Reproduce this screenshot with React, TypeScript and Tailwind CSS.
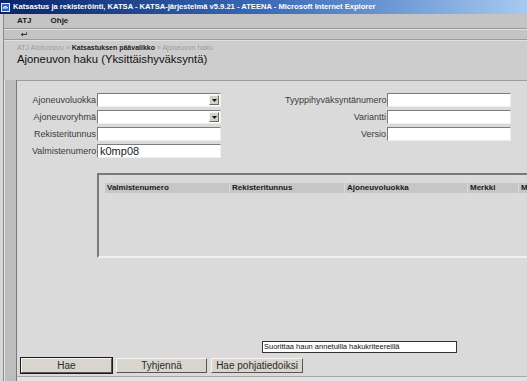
import type { ReactNode } from 'react';

const INSET =
  'border border-t-[#7c7c7c] border-l-[#7c7c7c] border-b-[#eeeeee] border-r-[#eeeeee] bg-white';

function Label({ children }: { children: ReactNode }) {
  return <span className="text-right text-[9px] leading-[14px] text-[#3a3a3a] whitespace-nowrap">{children}</span>;
}

function TextField({ value }: { value?: string }) {
  return (
    <div className={`h-[14px] flex items-center pl-[2px] text-[11px] leading-none text-[#222] ${INSET}`}>
      {value}
    </div>
  );
}

function SelectField() {
  return (
    <div className={`h-[14px] flex justify-end items-stretch py-[1px] pr-[1px] ${INSET}`}>
      <div className="w-[10px] flex items-center justify-center bg-[#d4d0c8] border border-t-[#f4f4f4] border-l-[#f4f4f4] border-b-[#6a6a6a] border-r-[#6a6a6a]">
        <svg width="5" height="3" viewBox="0 0 5 3">
          <path d="M0 0H5L2.5 3Z" fill="#111" />
        </svg>
      </div>
    </div>
  );
}

function Button({ children, primary }: { children: ReactNode; primary?: boolean }) {
  return (
    <div className={primary ? 'border border-[#1a1a1a]' : 'border border-transparent'}>
      <div className="h-[15px] flex items-center justify-center bg-[#d8d5cf] border border-t-[#f6f6f6] border-l-[#f6f6f6] border-b-[#555] border-r-[#555] text-[10px] text-[#2a2a2a]">
        {children}
      </div>
    </div>
  );
}

const COLUMNS = [
  { label: 'Valmistenumero', w: 'w-[124px]' },
  { label: 'Rekisteritunnus', w: 'w-[114px]' },
  { label: 'Ajoneuvoluokka', w: 'w-[122px]' },
  { label: 'Merkki', w: 'w-[50px]' },
  { label: 'Malli', w: 'w-[80px]' },
];

export default function App() {
  return (
    <div className="w-[527px] h-[381px] overflow-hidden flex flex-col bg-[#d2d2d2] font-['Liberation_Sans',Arial,sans-serif]">
      {/* Title bar */}
      <div className="h-[14px] flex items-center gap-[3px] pl-[1px] bg-gradient-to-r from-[#0a246a] via-[#3a6ab8] to-[#a6caf0] shrink-0">
        <svg width="9" height="9" viewBox="0 0 9 9">
          <rect x="0" y="0" width="9" height="9" fill="#e8eef8" />
          <rect x="1" y="1" width="7" height="7" fill="#2b62c8" />
          <path d="M2 5.5C2 3 6.5 3 6.5 5H2.5" stroke="#fff" strokeWidth="1" fill="none" />
        </svg>
        <span className="text-[7.6px] font-bold text-white whitespace-nowrap">
          Katsastus ja rekisteröinti, KATSA - KATSA-järjestelmä v5.9.21 - ATEENA - Microsoft Internet Explorer
        </span>
      </div>

      <div className="flex-1 flex min-h-0">
        {/* window frame */}
        <div className="w-[3px] bg-[#d6d6d6]" />
        <div className="w-px bg-[#8a8a8a]" />

        <div className="flex-1 flex flex-col min-w-0">
          {/* Menu */}
          <div className="h-[14px] flex items-center gap-[19px] pl-[13px] bg-[#c4c4c4] text-[8px] font-bold text-[#1a1a1a]">
            <span>ATJ</span>
            <span>Ohje</span>
          </div>
          <div className="h-px bg-[#9a9a9a]" />
          <div className="h-px bg-[#e2e2e2]" />
          {/* Toolbar */}
          <div className="h-[9px] flex items-center pl-[16px] bg-[#c4c4c4]">
            <svg width="7" height="5" viewBox="0 0 7 5">
              <path d="M6.5 0.5V2.5H1.5M3 1L1.2 2.5L3 4" stroke="#333" strokeWidth="1" fill="none" />
            </svg>
          </div>
          <div className="h-px bg-[#9a9a9a]" />
          <div className="h-px bg-[#e2e2e2]" />

          {/* Breadcrumb + title */}
          <div className="h-[39px] flex flex-col pl-[13px] pt-[2px] bg-[#cdcdcd]">
            <div className="text-[7px] leading-[9px] text-[#9c9c9c] whitespace-nowrap">
              ATJ Aloitussivu » <span className="font-bold text-[#222]">Katsastuksen päävalikko</span> » Ajoneuvon haku
            </div>
            <div className="mt-[1px] text-[11.3px] leading-[13px] text-[#111] whitespace-nowrap">
              Ajoneuvon haku (Yksittäishyväksyntä)
            </div>
          </div>

          {/* Frame body */}
          <div className="flex-1 flex min-h-0">
            <div className="w-px bg-[#e4e4e4]" />
            <div className="w-[11px] bg-[#bdbdbd]" />
            <div className="w-px bg-[#7a7a7a]" />

            <div className="relative flex-1 flex flex-col bg-[#dadada] border-t border-[#9c9c9c] min-w-0">
              {/* Search form */}
              <div className="flex pt-[12px] pl-[15px]">
                <div className="grid grid-cols-[64px_124px] gap-x-px gap-y-[3px]">
                  <Label>Ajoneuvoluokka</Label>
                  <SelectField />
                  <Label>Ajoneuvoryhmä</Label>
                  <SelectField />
                  <Label>Rekisteritunnus</Label>
                  <TextField />
                  <Label>Valmistenumero</Label>
                  <TextField value="k0mp08" />
                </div>
                <div className="ml-[64px] grid grid-cols-[101px_124px] gap-x-px gap-y-[3px] content-start">
                  <Label>Tyyppihyväksyntänumero</Label>
                  <TextField />
                  <Label>Variantti</Label>
                  <TextField />
                  <Label>Versio</Label>
                  <TextField />
                </div>
              </div>

              {/* Results */}
              <div className="mt-[15px] ml-[80px] w-[460px] h-[85px] shrink-0 border-t-2 border-l-2 border-t-[#7a7a7a] border-l-[#7a7a7a] border-b-2 border-b-[#f0f0f0] pt-[8px] pl-[6px]">
                <div className="flex gap-px">
                  {COLUMNS.map((c) => (
                    <div
                      key={c.label}
                      className={`${c.w} shrink-0 h-[10px] bg-[#c6c6c6] pl-[2px] text-[8px] leading-[10px] font-bold text-[#1a1a1a] overflow-hidden whitespace-nowrap`}
                    >
                      {c.label}
                    </div>
                  ))}
                </div>
              </div>

              {/* Tooltip */}
              <div className="absolute left-[245px] top-[260px] w-[195px] h-[12px] bg-white border border-[#333] pl-px text-[7.5px] leading-[10px] text-[#111] whitespace-nowrap">
                Suorittaa haun annetuilla hakukriteereillä
              </div>

              {/* Buttons */}
              <div className="mt-auto flex gap-[2px] pl-[3px]">
                <div className="w-[93px]">
                  <Button primary>Hae</Button>
                </div>
                <div className="w-[93px]">
                  <Button>Tyhjennä</Button>
                </div>
                <div className="w-[94px]">
                  <Button>Hae pohjatiedoiksi</Button>
                </div>
              </div>
              <div className="mt-[2px] h-px bg-[#a8a8a8]" />
              <div className="h-[4px] bg-[#e2e2e2]" />
            </div>
          </div>
        </div>
      </div>
    </div>
  );
}
